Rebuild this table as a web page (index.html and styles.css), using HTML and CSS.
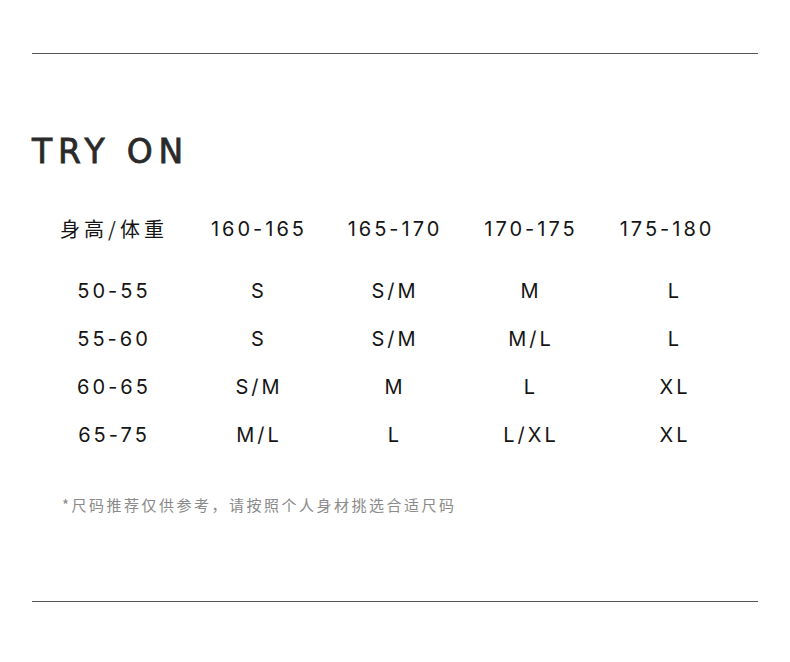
FILE: index.html
```html
<!DOCTYPE html>
<html lang="zh-CN">
<head>
<meta charset="utf-8">
<title>TRY ON</title>
<link rel="stylesheet" href="styles.css">
</head>
<body>
<div class="page">
  <div class="rule"></div>
  <h1 class="title">TRY ON</h1>
  <div class="table">
    <div class="cell head cjk">身高/体重</div>
    <div class="cell head">160-165</div>
    <div class="cell head">165-170</div>
    <div class="cell head">170-175</div>
    <div class="cell head">175-180</div>

    <div class="cell">50-55</div>
    <div class="cell">S</div>
    <div class="cell">S/M</div>
    <div class="cell">M</div>
    <div class="cell last">L</div>

    <div class="cell">55-60</div>
    <div class="cell">S</div>
    <div class="cell">S/M</div>
    <div class="cell">M/L</div>
    <div class="cell last">L</div>

    <div class="cell">60-65</div>
    <div class="cell">S/M</div>
    <div class="cell">M</div>
    <div class="cell">L</div>
    <div class="cell last">XL</div>

    <div class="cell">65-75</div>
    <div class="cell">M/L</div>
    <div class="cell">L</div>
    <div class="cell">L/XL</div>
    <div class="cell last">XL</div>
  </div>
  <p class="note">*尺码推荐仅供参考，请按照个人身材挑选合适尺码</p>
  <div class="rule"></div>
</div>
</body>
</html>
```
FILE: styles.css
```css
* { box-sizing: border-box; }
html, body { margin: 0; padding: 0; background: #fff; }
body {
  font-family: "Inter", "Noto Sans CJK SC", sans-serif;
  color: #1e1e1e;
}
.page {
  padding: 53px 32px 0;
}
.rule {
  height: 1px;
  background: #555;
}
.title {
  margin: 81px 0 0;
  font-family: "DejaVu Sans", sans-serif;
  font-size: 33px;
  line-height: 33px;
  font-weight: normal;
  letter-spacing: 5.8px;
  color: #2a2a2a;
  -webkit-text-stroke: 0.8px #2a2a2a;
}
.table {
  margin: 37px 0 0 5px;
  display: grid;
  grid-template-columns: 154px repeat(4, 136px);
  grid-template-rows: 62px 48px 48px 48px 48px;
}
.cell {
  text-align: center;
  font-size: 20px;
  line-height: 48px;
  letter-spacing: 3px;
  white-space: nowrap;
  align-self: end;
  color: #151515;
}
.head { align-self: start; }
.cjk {
  font-family: "Noto Sans CJK SC", sans-serif;
  letter-spacing: 4px;
}
.last { padding-left: 16px; }
.note {
  margin: 36px 0 0 30px;
  font-family: "Noto Sans CJK SC", sans-serif;
  font-size: 15px;
  line-height: 20px;
  letter-spacing: 2.5px;
  color: #8a8a8a;
}
.note + .rule { margin-top: 86px; }
```
